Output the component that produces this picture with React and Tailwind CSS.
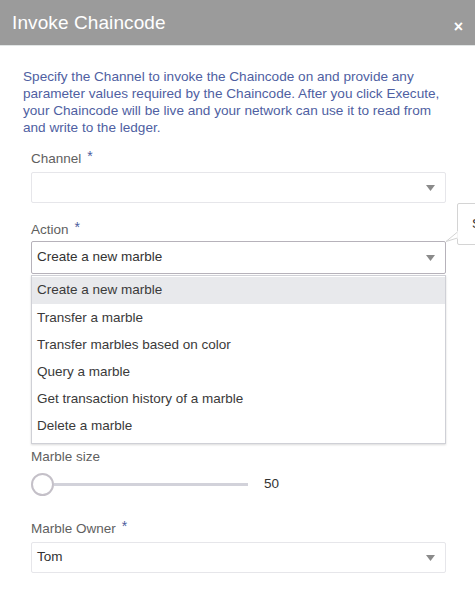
import React from 'react';

const actions = [
  'Create a new marble',
  'Transfer a marble',
  'Transfer marbles based on color',
  'Query a marble',
  'Get transaction history of a marble',
  'Delete a marble',
];

function Caret() {
  return (
    <svg width="9" height="6" viewBox="0 0 9 6" className="shrink-0">
      <path d="M0 0 L9 0 L4.5 6 Z" fill="#8a8a8a" />
    </svg>
  );
}

function Label({ children, required }) {
  return (
    <div className="flex items-start text-[13.5px] text-[#5f5f5f] leading-4">
      <span>{children}</span>
      {required && <span className="ml-[6px] -mt-[3px] text-[#4d5c9c] text-[14px]">*</span>}
    </div>
  );
}

export default function App() {
  return (
    <div className="w-[475px] h-[605px] bg-white overflow-hidden relative" style={{ fontFamily: '"Liberation Sans", Arial, sans-serif' }}>
      {/* header */}
      <div className="h-[46px] bg-[#9b9b9b] flex items-center justify-between pl-[12px] pr-[12px] border-b border-[#e2e6e6]">
        <h1 className="text-[19px] text-white tracking-[0.1px] mt-[1px]">Invoke Chaincode</h1>
        <span className="text-white text-[16px] font-bold mt-[8px] leading-none">×</span>
      </div>

      <div className="pl-[23px] pr-[20px] pt-[22px]">
        <p className="text-[13.6px] leading-[17px] text-[#4f5fa2]">
          Specify the Channel to invoke the Chaincode on and provide any parameter values required by the Chaincode. After you click Execute, your Chaincode will be live and your network can use it to read from and write to the ledger.
        </p>
      </div>

      <div className="pl-[31px] w-[446px]">
        <div className="mt-[15px]">
          <Label required>Channel</Label>
          <div className="mt-[5px] h-[31px] border border-[#e6e6ea] rounded-[2px] flex items-center justify-end pr-[10px]">
            <Caret />
          </div>
        </div>

        <div className="mt-[19px] relative">
          <Label required>Action</Label>
          <div className="mt-[3px] h-[33px] border border-[#b6b2ba] rounded-[2px] flex items-center justify-between pl-[5px] pr-[10px] text-[13.5px] text-[#333]">
            <span>Create a new marble</span>
            <Caret />
          </div>
          <div className="absolute left-0 right-0 top-[53px] border border-[#cfd0d6] shadow-[0_1px_2px_rgba(0,0,0,0.15)] bg-white z-10 pt-[1px] pb-[3px]">
            {actions.map((a, i) => (
              <div
                key={a}
                className={`h-[27.2px] flex items-center pl-[5px] text-[13.5px] text-[#3a3a3a] ${i === 0 ? 'bg-[#e8e9ec]' : ''}`}
              >
                {a}
              </div>
            ))}
          </div>
        </div>

        {/* spacer where dropdown covers hidden fields */}
        <div className="h-[175px]" />

        <div>
          <div className="text-[13.5px] text-[#5f5f5f] leading-4">Marble size</div>
          <div className="mt-[7px] flex items-center h-[24px]">
            <div className="w-[23px] h-[23px] rounded-full border-2 border-[#c4c0c8] bg-white shrink-0" />
            <div className="w-[194px] h-[3px] bg-[#d2d2da]" />
            <span className="ml-[16px] text-[13.5px] text-[#333]">50</span>
          </div>
        </div>

        <div className="mt-[25px]">
          <Label required>Marble Owner</Label>
          <div className="mt-[5px] h-[31px] border border-[#e6e6ea] rounded-[2px] flex items-center justify-between pl-[5px] pr-[10px] text-[13.5px] text-[#333]">
            <span>Tom</span>
            <Caret />
          </div>
        </div>
      </div>

      {/* tooltip peeking from right edge */}
      <div className="absolute left-[457px] top-[203px] w-[40px] h-[42px] border border-[#d4d4d4] bg-white rounded-[2px] flex items-center pl-[14px] text-[13.5px] text-[#333]">
        S
      </div>
      <svg className="absolute left-[444px] top-[228px]" width="16" height="16" viewBox="0 0 16 16">
        <path d="M13.5 4 L2 13.5 L13.5 10" fill="white" stroke="#d4d4d4" strokeWidth="1" />
        <rect x="13.5" y="3" width="3" height="8" fill="white" />
      </svg>
    </div>
  );
}
